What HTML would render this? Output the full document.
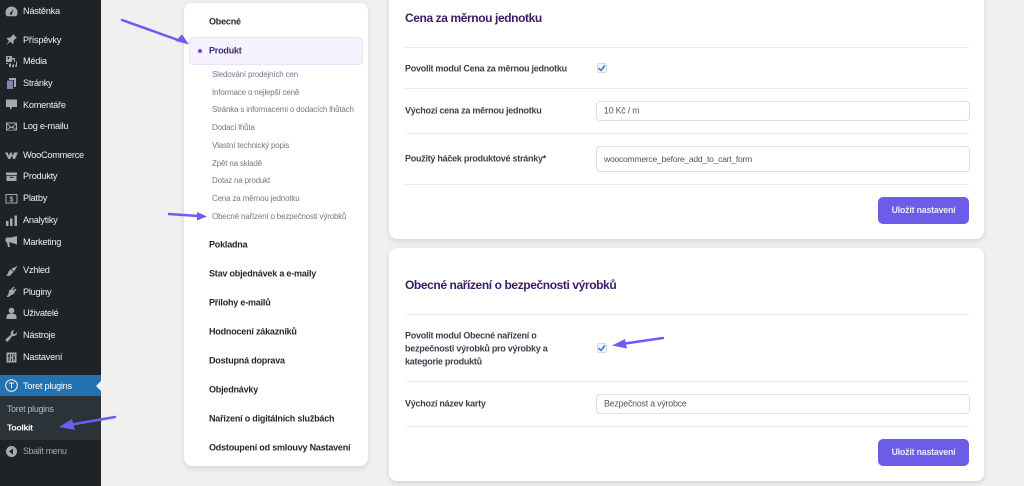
<!DOCTYPE html>
<html lang="cs"><head><meta charset="utf-8"><title>Toolkit</title>
<style>
html,body{margin:0;padding:0}
body{width:1024px;height:486px;overflow:hidden;background:#f0f0f1;position:relative;font-family:"Liberation Sans",sans-serif}
#w{position:absolute;left:0;top:0;width:1024px;height:486px;filter:blur(.35px)}
.a{position:absolute}
.t{position:absolute;white-space:nowrap;transform:translateY(-50%);line-height:1.2}
.m{left:23px;font-size:9.2px;letter-spacing:-.25px;color:#eef0f1;transform:translateY(calc(-50% + .5px))}
.i{position:absolute;left:5px;width:13px;height:13px;fill:#a7aaad}
.card{position:absolute;background:#fff;border-radius:8px;box-shadow:0 2px 6px rgba(0,0,0,.12)}
.g{font-size:9px;letter-spacing:-.2px;font-weight:700;color:#26262f}
.s{left:212px;font-size:8px;letter-spacing:-.18px;color:#77778a}
.l{left:405px;font-size:9px;letter-spacing:-.26px;font-weight:700;color:#3f3f4c}
.h{left:405px;font-size:12px;letter-spacing:-.4px;font-weight:700;color:#3a1d68}
.hr{position:absolute;left:405px;width:564px;height:1px;background:#e9e9ee}
.in{position:absolute;left:596px;width:372px;background:#fff;border:1px solid #dcdde3;border-radius:4px;box-sizing:content-box}
.v{left:604px;font-size:8.8px;letter-spacing:-.2px;color:#55555f}
.cb{position:absolute;left:597px;width:8px;height:8px;background:#eef1f8;border:1px solid #d8dbe3;border-radius:2px}
.btn{position:absolute;left:878px;width:91px;height:27px;background:#6c5ce7;border-radius:5px;color:#ece9ff;font-size:8.8px;letter-spacing:-.2px;font-weight:700;text-align:center;line-height:27px}
</style></head><body><div id="w">

<div class="a" style="left:0;top:0;width:101px;height:486px;background:#1d2327"></div>
<div class="a" style="left:0;top:375px;width:101px;height:21px;background:#2271b1"></div>
<div class="a" style="left:0;top:396px;width:101px;height:44px;background:#2c3338"></div>
<div class="a" style="left:96px;top:381px;width:0;height:0;border-top:5px solid transparent;border-bottom:5px solid transparent;border-right:5px solid #f0f0f1"></div>

<svg class="i" style="top:5px" viewBox="0 0 13 13"><path d="M6.500 1.500a6 6 0 0 0-6 6c0 1.500.5 2.800 1.400 3.800h9.200c.9-1 1.400-2.300 1.400-3.800a6 6 0 0 0-6-6zm.6 6.900a1.200 1.200 0 1 1-1.400-1L8.500 4z"/></svg>
<svg class="i" style="top:33px" viewBox="0 0 13 13"><path d="M8 1l4 4-1.200.4-2.300 2.300.2 2.300-1 1-2.400-2.400L1 12.300l3-4.300L1.700 5.600l1-1 2.300.2 2.300-2.300z"/></svg>
<svg class="i" style="top:55px" viewBox="0 0 13 13"><path d="M1 1h6v2h3v4H9V4.500H7V7H1zM2.500 3a1 1 0 1 0 2 0 1 1 0 0 0-2 0zM1 8h2v1H1zM4 8.500h2v3.500H4zM8 9h1v2.500a1 1 0 1 1-1.500-1zM11 6.500h1V11a1 1 0 1 1-1.500-1l.5-.1z"/></svg>
<svg class="i" style="top:77px" viewBox="0 0 13 13"><path d="M4 1h7v9H9V3H4z"/><path fill="#8f7fb0" d="M2 3.500h6V12H2z"/></svg>
<svg class="i" style="top:98px" viewBox="0 0 13 13"><path d="M1 1.500h11v7.500H7.500L5 12V9H1z"/></svg>
<svg class="i" style="top:120px" viewBox="0 0 13 13"><path d="M1 2.500h11v8H1zm1.200 1l4.300 3.500 4.300-3.500zm0 1v5l2.600-2.700zm8.600 0L8.200 6.800l2.600 2.700zM5.500 7.700l-2.700 2h7.400l-2.700-2-1 .8z"/></svg>
<svg class="i" style="top:149px" viewBox="0 0 13 13"><path d="M0 3.500h2.800l1 3.500 1.500-3.500h1.400l1 3.500 1.300-3.500H13L10 10H8.200L7 6.800 5.300 10H3.500z"/></svg>
<svg class="i" style="top:170px" viewBox="0 0 13 13"><path d="M1 2.500h11v2.500H1zM1.500 5.700h10V11h-10zm3 1v1h4v-1z"/></svg>
<svg class="i" style="top:192px" viewBox="0 0 13 13"><path fill-rule="evenodd" d="M.5 2h12v9.500H.5zm1 1v7.500h10V3z"/><text x="6.500" y="9.300" font-size="7" font-weight="700" text-anchor="middle" font-family="Liberation Sans">$</text></svg>
<svg class="i" style="top:214px" viewBox="0 0 13 13"><path d="M1 7h2.500v5H1zM5 4.500h2.500V12H5zM9.500 1.500H12V12H9.500z"/></svg>
<svg class="i" style="top:235px" viewBox="0 0 13 13"><path d="M12 1v8.500L6 7.500H4l1 4.500H3L2 7.500a2.700 2.700 0 0 1 0-5h4z"/></svg>
<svg class="i" style="top:264px" viewBox="0 0 13 13"><path d="M12.500 2L9 7.500 6 5zM5.500 5.500l3 2.500-1.500 1.500L4.500 12 1 11.500l2-2 .5-2z"/></svg>
<svg class="i" style="top:285px" viewBox="0 0 13 13"><path d="M8.500 1.500l1 1-2 2 1 1 2-2 1 1-2 2.500-.5 2-2 .5L3.500 12H1.500l2-3 .5-3 .5-1.500 1 .5z"/></svg>
<svg class="i" style="top:307px" viewBox="0 0 13 13"><circle cx="6.500" cy="3.500" r="2.800"/><path d="M1.500 12V9.500c0-1.800 2-3 5-3s5 1.200 5 3V12z"/></svg>
<svg class="i" style="top:329px" viewBox="0 0 13 13"><path d="M12 3.500a3.500 3.500 0 0 1-4.600 3.400L3.300 12a1.500 1.500 0 0 1-2.300-2l5-4.200A3.500 3.500 0 0 1 9.500 1L7.800 3l.5 1.700 1.700.5L12 3z"/></svg>
<svg class="i" style="top:351px" viewBox="0 0 13 13"><path fill-rule="evenodd" d="M1.500 1.500h10v10h-10zM3.500 3v1.500H3v1.200h.5V10h1V5.700H5V4.500h-.5V3zm5 0v3.500H8v1.200h.5V10h1V7.700h.5V6.500h-.5V3zM6 3v3h1V3zm0 4.500V10h1V7.500z"/></svg>
<svg class="a" style="left:5px;top:379px;width:13px;height:13px" viewBox="0 0 13 13"><circle cx="6.500" cy="6.500" r="5.800" fill="none" stroke="#f0f6fc" stroke-width="1"/><path d="M4 4h5M6.500 4v5.200" stroke="#f0f6fc" stroke-width="1" fill="none"/></svg>
<svg class="i" style="top:445px" viewBox="0 0 13 13"><path fill-rule="evenodd" d="M6.500 1a5.500 5.500 0 1 0 0 11 5.500 5.500 0 0 0 0-11zM8 3.500v6L4 6.500z"/></svg>

<div class="t m" style="top:11px">Nástěnka</div>
<div class="t m" style="top:39.500px">Příspěvky</div>
<div class="t m" style="top:61px">Média</div>
<div class="t m" style="top:83px">Stránky</div>
<div class="t m" style="top:104.500px">Komentáře</div>
<div class="t m" style="top:126px">Log e-mailu</div>
<div class="t m" style="top:155px">WooCommerce</div>
<div class="t m" style="top:176px">Produkty</div>
<div class="t m" style="top:198px">Platby</div>
<div class="t m" style="top:220px">Analytiky</div>
<div class="t m" style="top:241.500px">Marketing</div>
<div class="t m" style="top:270px">Vzhled</div>
<div class="t m" style="top:291.500px">Pluginy</div>
<div class="t m" style="top:313px">Uživatelé</div>
<div class="t m" style="top:335px">Nástroje</div>
<div class="t m" style="top:357px">Nastavení</div>
<div class="t m" style="top:385.500px;color:#fff">Toret plugins</div>
<div class="t m" style="left:7px;top:409px;font-size:8.800px;color:#b4b9be">Toret plugins</div>
<div class="t m" style="left:7px;top:427px;font-size:8.600px;font-weight:700;color:#fff">Toolkit</div>
<div class="t m" style="top:451px;font-size:8.800px;color:#a7aaad">Sbalit menu</div>

<div class="card" style="left:184px;top:3px;width:184px;height:463px"></div>
<div class="a" style="left:189px;top:37px;width:172px;height:26px;background:#f6f3fe;border:1px solid #e8e2fa;border-radius:4px"></div>
<div class="a" style="left:198px;top:49px;width:4px;height:4px;border-radius:50%;background:#6c4fd8"></div>
<div class="t g" style="left:209px;top:21.500px">Obecné</div>
<div class="t g" style="left:209px;top:50.500px;color:#3f2a78">Produkt</div>
<div class="t s" style="top:74.500px">Sledování prodejních cen</div>
<div class="t s" style="top:92.500px">Informace o nejlepší ceně</div>
<div class="t s" style="top:110px">Stránka s informacemi o dodacích lhůtách</div>
<div class="t s" style="top:128px">Dodací lhůta</div>
<div class="t s" style="top:145.500px">Vlastní technický popis</div>
<div class="t s" style="top:163.500px">Zpět na skladě</div>
<div class="t s" style="top:181px">Dotaz na produkt</div>
<div class="t s" style="top:199px">Cena za měrnou jednotku</div>
<div class="t s" style="top:216.500px">Obecné nařízení o bezpečnosti výrobků</div>
<div class="t g" style="left:209px;top:245px">Pokladna</div>
<div class="t g" style="left:209px;top:274px">Stav objednávek a e-maily</div>
<div class="t g" style="left:209px;top:303px">Přílohy e-mailů</div>
<div class="t g" style="left:209px;top:332px">Hodnocení zákazníků</div>
<div class="t g" style="left:209px;top:361px">Dostupná doprava</div>
<div class="t g" style="left:209px;top:390px">Objednávky</div>
<div class="t g" style="left:209px;top:419px">Nařízení o digitálních službách</div>
<div class="t g" style="left:209px;top:448px">Odstoupení od smlouvy Nastavení</div>

<div class="card" style="left:389px;top:-10px;width:595px;height:249px"></div>
<div class="t h" style="top:18px">Cena za měrnou jednotku</div>
<div class="hr" style="top:47px"></div>
<div class="t l" style="top:69px">Povolit modul Cena za měrnou jednotku</div>
<div class="cb" style="top:63px"></div>
<div class="hr" style="top:88px"></div>
<div class="t l" style="top:111px">Výchozí cena za měrnou jednotku</div>
<div class="in" style="top:101px;height:18px"></div>
<div class="t v" style="top:111px">10 Kč / m</div>
<div class="hr" style="top:133px"></div>
<div class="t l" style="top:159px">Použitý háček produktové stránky*</div>
<div class="in" style="top:146px;height:24px"></div>
<div class="t v" style="top:159px;font-size:8.600px;letter-spacing:-.26px">woocommerce_before_add_to_cart_form</div>
<div class="hr" style="top:184px"></div>
<div class="btn" style="top:197px">Uložit nastavení</div>

<div class="card" style="left:389px;top:248px;width:595px;height:233px"></div>
<div class="t h" style="top:285px">Obecné nařízení o bezpečnosti výrobků</div>
<div class="hr" style="top:314px"></div>
<div class="t l" style="top:336px">Povolit modul Obecné nařízení o</div>
<div class="t l" style="top:349px">bezpečnosti výrobků pro výrobky a</div>
<div class="t l" style="top:362px">kategorie produktů</div>
<div class="cb" style="top:343px"></div>
<div class="hr" style="top:381px"></div>
<div class="t l" style="top:404px">Výchozí název karty</div>
<div class="in" style="top:394px;height:18px"></div>
<div class="t v" style="top:404px">Bezpečnost a výrobce</div>
<div class="hr" style="top:426px"></div>
<div class="btn" style="top:439px">Uložit nastavení</div>

<svg class="a" style="left:0;top:0" width="1024" height="486" viewBox="0 0 1024 486">
<g fill="none" stroke="#2f7fc8" stroke-width="1.500" stroke-linecap="round" stroke-linejoin="round"><path d="M599 68.500l2 2 3.500-4.500"/><path d="M599 348.500l2 2 3.500-4.500"/></g>
<g fill="none" stroke="#6d5cf0" stroke-width="2.500" stroke-linecap="round"><path d="M122 20L178 40"/><path d="M169 214L198 216"/><path d="M115 417L72 424.500"/><path d="M663 338L625 343.500"/></g>
<g fill="#6d5cf0"><path d="M189 44.500L175.500 41 182 34.500z"/><path d="M207 216.500L197 212 197 220.500z"/><path d="M59 427L72 419 75 430z"/><path d="M612 345.500L625 339 627 348.500z"/></g>
</svg>
</div></body></html>
